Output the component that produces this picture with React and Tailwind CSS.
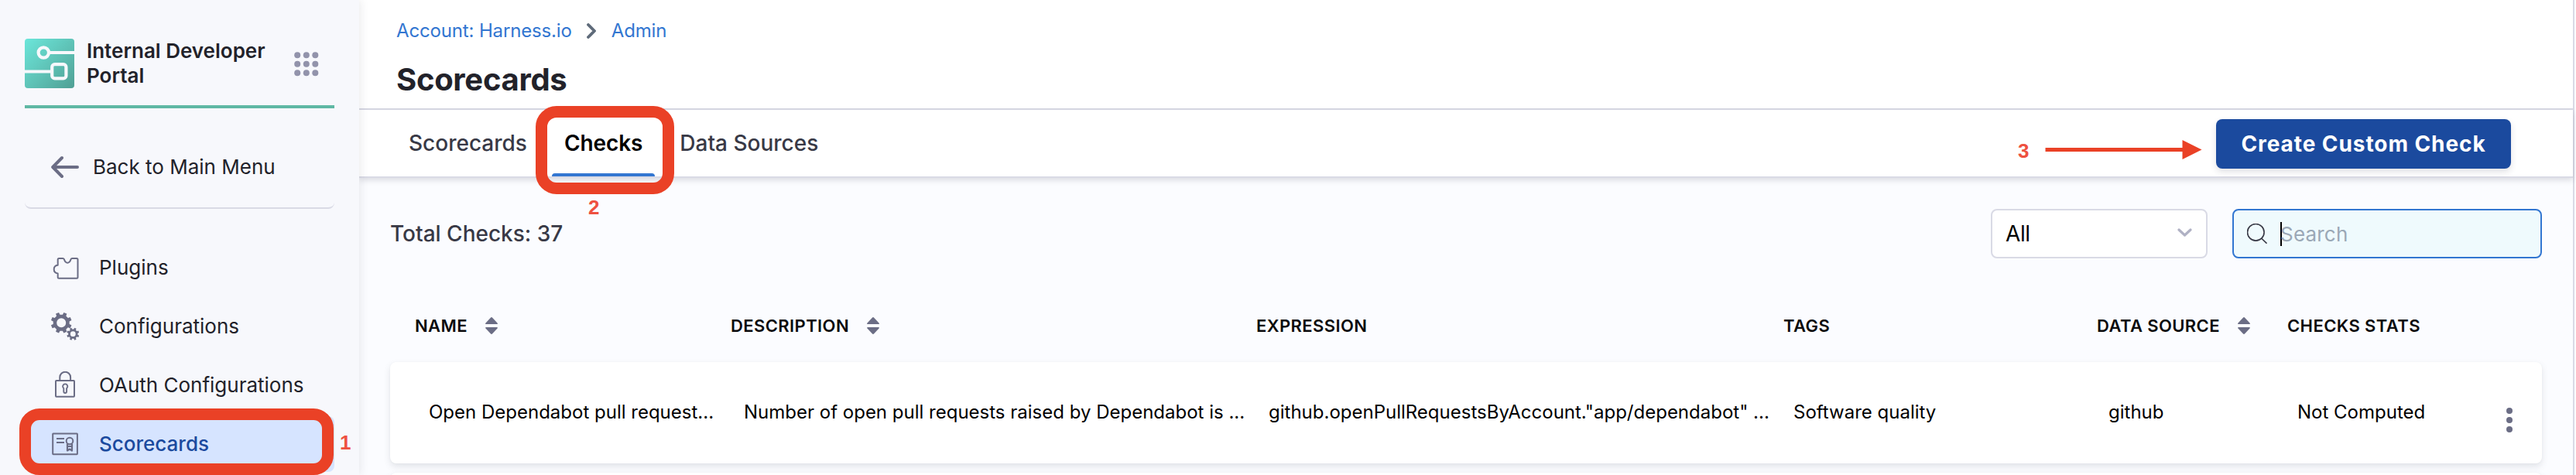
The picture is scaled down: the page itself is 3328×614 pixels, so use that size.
function gearPath(cx, cy, outer, root, teeth) {
  const pts = [];
  const step = (Math.PI * 2) / teeth;
  for (let i = 0; i < teeth; i++) {
    const a = i * step + step / 2;
    [[-0.29, root], [-0.2, outer], [0.2, outer], [0.29, root]].forEach(([o, r]) => {
      pts.push(`${(cx + r * Math.cos(a + o * step)).toFixed(2)} ${(cy + r * Math.sin(a + o * step)).toFixed(2)}`);
    });
  }
  return `M${pts.join("L")}Z`;
}

const hole = (cx, cy, r) => `M${cx - r} ${cy}a${r} ${r} 0 1 0 ${2 * r} 0a${r} ${r} 0 1 0 ${-2 * r} 0Z`;

const Icon = ({ children }) => (
  <svg className="size-9 shrink-0" viewBox="0 0 36 36" fill="none" stroke="#6b6d85" strokeWidth="2" strokeLinejoin="round">
    {children}
  </svg>
);

const PluginIcon = () => (
  <Icon>
    <path d="M10.2 6h5c.8 0 1.3.5 1.7 1.3.8 2.8 2.2 4.4 4.3 4.4s3.5-1.6 4.3-4.4c.3-.8.9-1.3 1.7-1.3h5.800c.9 0 1.500.6 1.500 1.500v22.700c0 .9-.6 1.500-1.500 1.500H10.200c-.9 0-1.500-.6-1.500-1.500v-4.700c-3-.3-5-2.300-5-5.400s2-5.100 5-5.400V7.500C8.700 6.600 9.300 6 10.200 6z" />
  </Icon>
);

const GearsIcon = () => (
  <Icon>
    <g fill="#6b6d85" stroke="none" fillRule="evenodd">
      <path d={gearPath(13.2, 13.2, 13.6, 10.6, 8) + hole(13.2, 13.2, 6)} />
      <path d={gearPath(28.3, 27.7, 8.2, 6.2, 8) + hole(28.3, 27.7, 3.4)} />
    </g>
  </Icon>
);

const LockIcon = () => (
  <Icon>
    <rect x="6" y="12" width="24" height="20.7" rx="0.8" />
    <path d="M11.3 12V7.7a6.9 6.9 0 0 1 13.8 0V12" />
    <path d="M16.3 21.900a3.100 3.100 0 1 1 3.800 0v4.200a1.900 1.900 0 0 1-3.800 0z" strokeWidth="1.9" />
  </Icon>
);

const CertificateIcon = () => (
  <Icon>
    <rect x="2.2" y="4.500" width="31.7" height="26.7" rx="0.6" />
    <path d="M7 11h10M7 16h10" />
    <circle cx="24" cy="14" r="4.3" />
    <path d="M21 17.500v9l3-2 3 2v-9M21 21h6" strokeWidth="2.2" />
  </Icon>
);

const nav = [
  { label: "Plugins", icon: PluginIcon },
  { label: "Configurations", icon: GearsIcon },
  { label: "OAuth Configurations", icon: LockIcon },
  { label: "Scorecards", icon: CertificateIcon, active: true },
];

function Sidebar() {
  return (
    <aside className="relative z-10 h-full w-[464px] shrink-0 bg-[#f7f8fc] px-8 shadow-[0_0_12px_rgba(40,41,61,0.12)]">
      <div className="flex h-[140px] items-start border-b-4 border-[#5fb8a4] pt-[50px]">
        <svg className="size-16 shrink-0" viewBox="0 0 64 64" fill="none">
          <defs>
            <linearGradient id="logo" x1="0" y1="0" x2="1" y2="1">
              <stop offset="0" stopColor="#6be6da" />
              <stop offset="0.5" stopColor="#5fc4b8" />
              <stop offset="1" stopColor="#4f9f94" />
            </linearGradient>
          </defs>
          <rect width="64" height="64" rx="4" fill="url(#logo)" />
          <g stroke="#f7f8fc" strokeWidth="4.2">
            <circle cx="24.3" cy="18" r="6.7" />
            <path d="M31 18h33M0 42.500h35" />
            <rect x="35.2" y="33.2" width="18.2" height="18.2" rx="3.5" />
          </g>
        </svg>
        <div className="ml-4 h-16 w-[260px] text-[26px] leading-8 font-semibold text-[#22222a]">
          Internal Developer
          <br />
          Portal
        </div>
        <svg className="mt-[17px] ml-2 size-8" viewBox="0 0 32 32" fill="#9293ab">
          {[4.2, 15.8, 27.3].map((y) => [4.2, 15.8, 27.3].map((x) => <circle key={x + "-" + y} cx={x} cy={y} r="4" />))}
        </svg>
      </div>
      <div className="mt-6 flex h-[106px] items-center rounded-lg border-b-2 border-[#d9dae5] pl-[34px] text-[26px] text-[#22222a]">
        <svg className="size-9" viewBox="0 0 36 36" fill="none" stroke="#6b6d85" strokeWidth="4" strokeLinecap="round" strokeLinejoin="round">
          <path d="M14 6L2.200 18L14 30M2.500 18H34" />
        </svg>
        <span className="-mt-[2px] ml-[18px]">Back to Main Menu</span>
      </div>
      <nav className="mt-10 flex flex-col gap-1">
        {nav.map(({ label, icon: I, active }) => (
          <div
            key={label}
            className={
              active
                ? "flex h-[72px] items-center gap-[26px] rounded-lg bg-[#d6e4ff] pl-[34px] text-[26px] font-medium text-[#1b4a9e]"
                : "flex h-[72px] items-center gap-[26px] rounded-lg pl-[34px] text-[26px] text-[#22222a]"
            }
          >
            <I />
            <span className="-mt-[2px]">{label}</span>
          </div>
        ))}
      </nav>
    </aside>
  );
}

const SortIcon = () => (
  <svg className="h-[22px] w-4" viewBox="0 0 16 22" fill="#6b6d85">
    <path d="M6.800.7Q8-.6 9.200.7L15.500 7.600Q16.600 9 14.800 9H1.200Q-.6 9 .5 7.600Z" />
    <path d="M6.800 21.300Q8 22.600 9.200 21.300L15.500 14.400Q16.600 13 14.800 13H1.200Q-.6 13 .5 14.400Z" />
  </svg>
);

const columns = [
  { label: "NAME", sortable: true },
  { label: "DESCRIPTION", sortable: true },
  { label: "EXPRESSION" },
  { label: "TAGS" },
  { label: "DATA SOURCE", sortable: true },
  { label: "CHECKS STATS" },
];

const row = [
  "Open Dependabot pull request...",
  "Number of open pull requests raised by Dependabot is ...",
  'github.openPullRequestsByAccount."app/dependabot" ...',
  "Software quality",
  "github",
  "Not Computed",
];

function Toolbar() {
  return (
    <div className="flex h-16 items-center">
      <span className="text-[28px] font-medium text-[#383946]">Total Checks: 37</span>
      <div className="ml-auto flex h-16 w-[280px] items-center justify-between rounded-lg border-2 border-[#d9dae5] bg-white pr-[18px] pl-[17px] text-[28px] tracking-[-0.4px] text-black">
        All
        <svg className="-mt-1 h-[11px] w-[19px]" viewBox="0 0 19 11" fill="none" stroke="#b0b1c4" strokeWidth="3.2" strokeLinecap="round" strokeLinejoin="round">
          <path d="M2 2l7.500 7L17 2" />
        </svg>
      </div>
      <div className="ml-8 flex h-16 w-[400px] items-center rounded-lg border-2 border-[#3276d1] bg-[#effafd] pl-[17px] text-[26px] text-[#9ba8b6]">
        <svg className="size-[26px]" viewBox="0 0 26 26" fill="none" stroke="#383946" strokeWidth="1.6">
          <circle cx="11.3" cy="11.3" r="10.8" />
          <path d="M18.800 19.200l6.700 6.500" />
        </svg>
        <span className="ml-[17px] h-[31px] w-[2px] bg-black" />
        <span className="-ml-[2px] tracking-[0.2px]">Search</span>
      </div>
    </div>
  );
}

function Table() {
  return (
    <div>
      <div className="mt-[70px] grid h-[34px] grid-cols-[408px_679px_681px_405px_246px_1fr] items-center pl-8 text-[22px] font-semibold tracking-[0.4px] text-[#0b0b0d]">
        {columns.map((c) => (
          <div key={c.label} className="flex items-center gap-[23px] whitespace-nowrap">
            {c.label}
            {c.sortable && <SortIcon />}
          </div>
        ))}
      </div>
      <div className="mt-[30px] grid h-[131px] grid-cols-[407px_678px_678px_407px_244px_1fr_46px] items-center rounded-lg bg-white pl-[50px] text-2xl text-black shadow-[0_4px_8px_rgba(96,97,112,0.16),0_0_2px_rgba(40,41,61,0.04)]">
        {row.map((t) => (
          <div key={t} className="-mt-[2px] whitespace-nowrap">{t}</div>
        ))}
        <div className="mt-[19px] flex flex-col gap-1">
          <span className="size-2 rounded-full bg-[#6b6d85]" />
          <span className="size-2 rounded-full bg-[#6b6d85]" />
          <span className="size-2 rounded-full bg-[#6b6d85]" />
        </div>
      </div>
      <div className="mt-3 h-[131px] rounded-lg bg-white shadow-[0_4px_8px_rgba(96,97,112,0.16),0_0_2px_rgba(40,41,61,0.04)]" />
    </div>
  );
}

export default function App() {
  return (
    <div className="relative flex h-[614px] w-[3328px] overflow-hidden bg-[#fbfcff] font-[Inter,sans-serif]">
      <Sidebar />
      <main className="mr-[2px] h-full flex-1 border-r-2 border-[#d9dae5]">
        <header className="h-[142px] border-b-2 border-[#d9dae5] bg-white pl-12">
          <div className="flex items-center pt-6 text-2xl leading-8 tracking-[-0.15px] text-[#3276d1]">
            Account: Harness.io
            <svg className="ml-[19px] h-5 w-3" viewBox="0 0 12 20" fill="none" stroke="#5f6b7a" strokeWidth="3.8" strokeLinecap="round" strokeLinejoin="round">
              <path d="M2 2l8 8-8 8" />
            </svg>
            <span className="ml-5">Admin</span>
          </div>
          <h1 className="mt-[23px] text-[40px] leading-[48px] font-bold tracking-[-0.3px] text-[#22222a]">Scorecards</h1>
        </header>
        <div className="relative flex h-[88px] items-center justify-between border-b-2 border-[#d9dae5] bg-white pr-20 pl-12 shadow-[0_3px_7px_rgba(40,41,61,0.15)]">
          <div className="flex h-full gap-4 text-[28px] font-medium text-[#383946]">
            <div className="flex items-center px-4">Scorecards</div>
            <div className="flex flex-col">
              <div className="flex flex-1 items-center px-4 pt-1 font-semibold tracking-[-0.1px] text-black">Checks</div>
              <div className="h-1 rounded-t bg-[#3276d1]" />
            </div>
            <div className="flex items-center px-4">Data Sources</div>
          </div>
          <button className="mt-[2px] h-16 w-[381px] rounded-lg bg-[#1b4a9e] text-[28px] font-bold tracking-[0.92px] text-white shadow-[0_4px_8px_rgba(40,41,61,0.14)]">
            Create Custom Check
          </button>
        </div>
        <div className="px-10 pt-10">
          <Toolbar />
          <Table />
        </div>
      </main>

      <div className="absolute top-[528px] left-[25px] z-20 h-[86px] w-[406px] rounded-[26px] border-[15px] border-[#ea4126]" />
      <div className="absolute top-[137px] left-[692px] z-20 h-[114px] w-[179px] rounded-[27px] border-[15px] border-[#ea4126]" />
      <div className="absolute top-[557px] left-[439px] z-20 font-['Liberation_Sans',sans-serif] text-[26px] leading-[30px] font-bold text-[#ee5140]">1</div>
      <div className="absolute top-[253px] left-[760px] z-20 font-['Liberation_Sans',sans-serif] text-[26px] leading-[30px] font-bold text-[#ee5140]">2</div>
      <div className="absolute top-[180px] left-[2607px] z-20 font-['Liberation_Sans',sans-serif] text-[26px] leading-[30px] font-bold text-[#ee5140]">3</div>
      <svg className="absolute top-[181px] left-[2642px] z-20 h-[25px] w-[203px]" viewBox="0 0 203 25" fill="#ea4126">
        <path d="M.5 10H177.500V0L202.500 12.500L177.500 25V15H.5Z" />
      </svg>
    </div>
  );
}
